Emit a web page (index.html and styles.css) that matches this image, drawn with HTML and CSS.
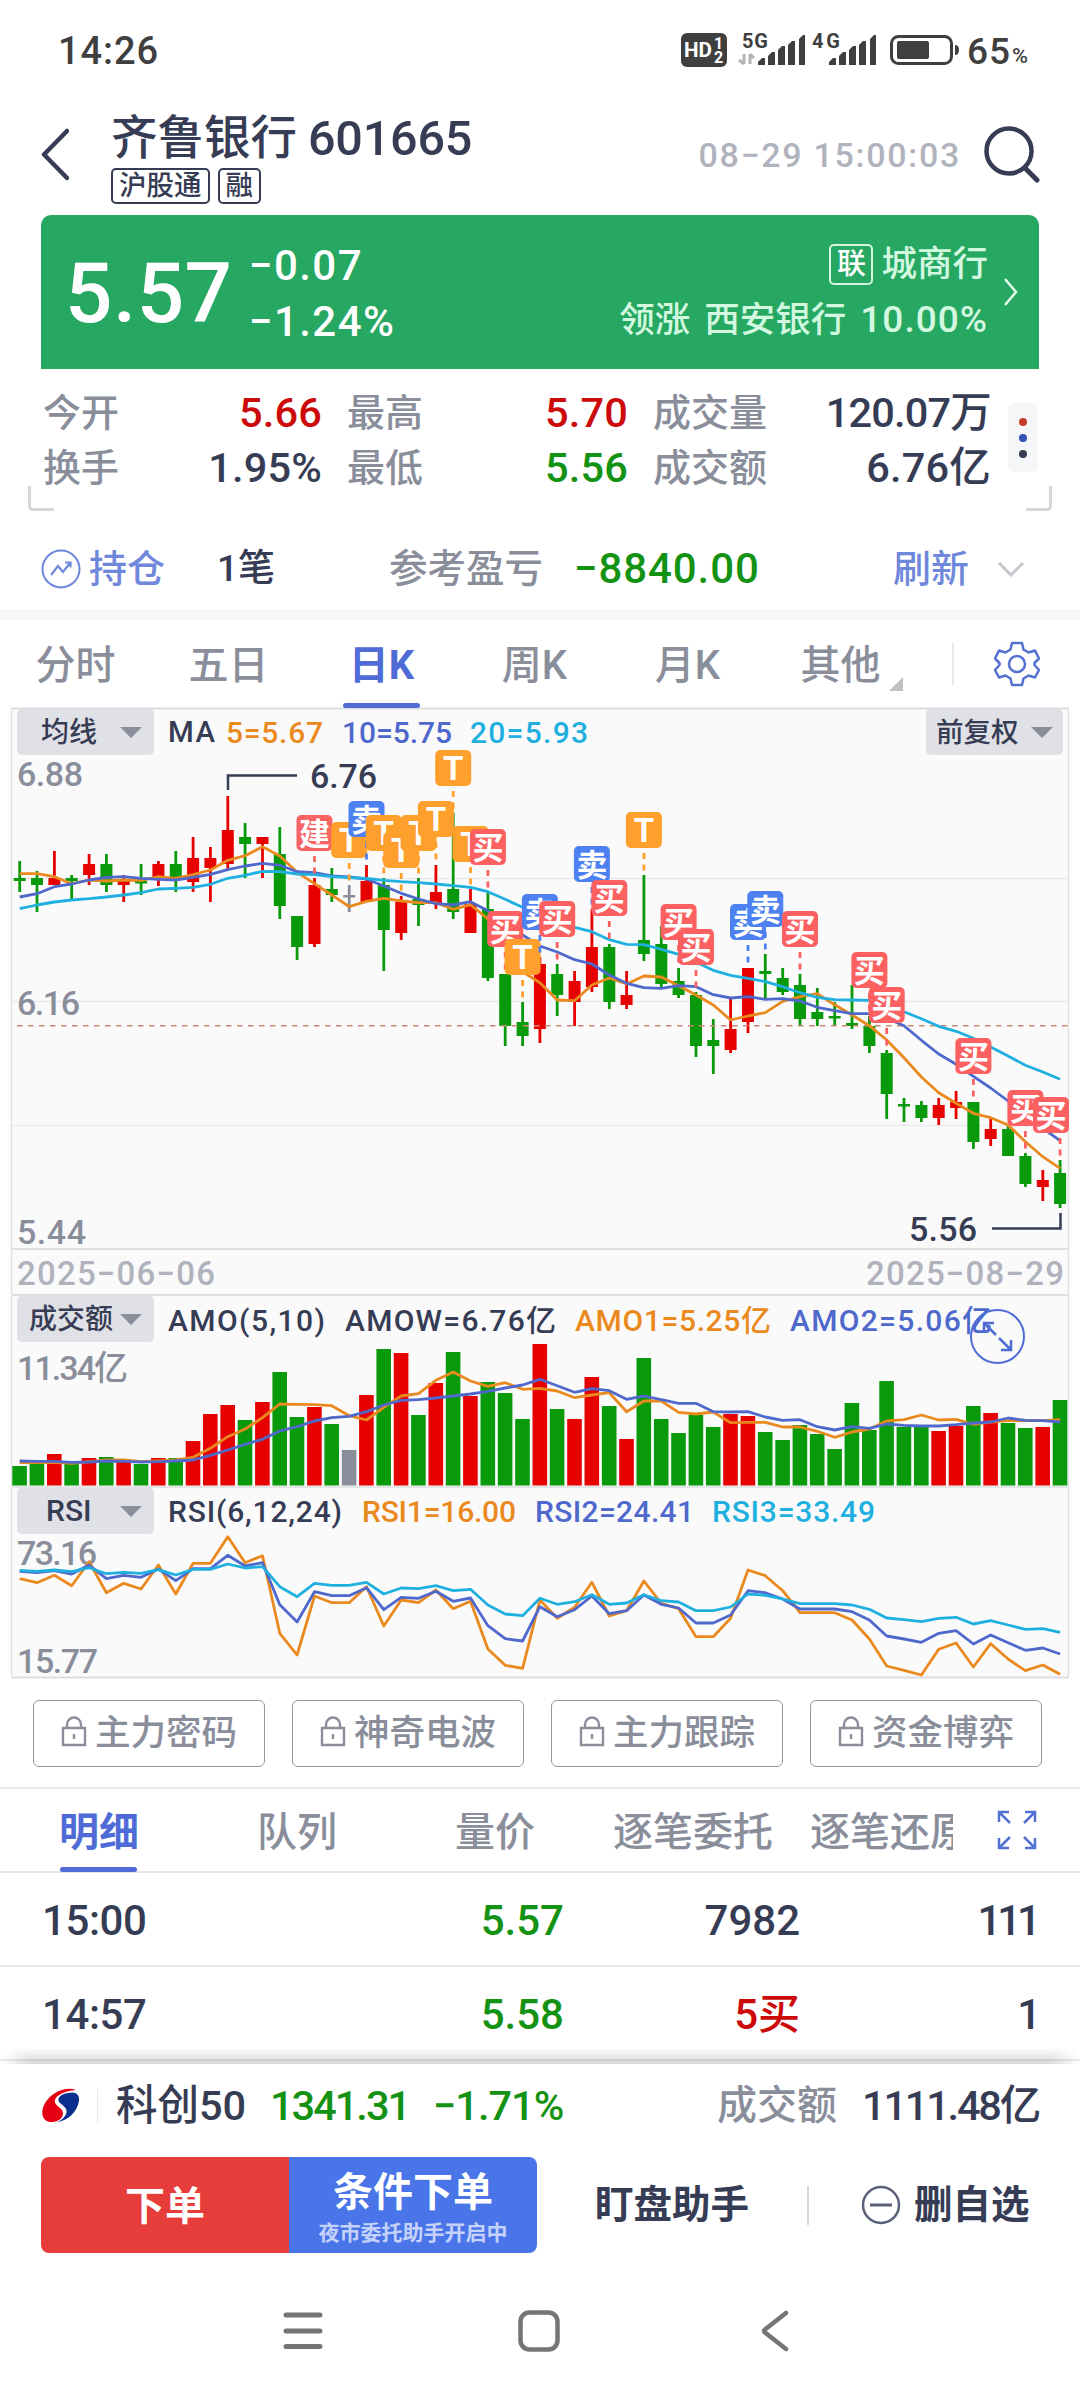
FILE: index.html
```html
<!DOCTYPE html>
<html lang="zh-CN">
<head>
<meta charset="utf-8">
<title>齐鲁银行 601665</title>
<link rel="stylesheet" href="styles.css">
</head>
<body>
<div class="status">
  <span class="clock">14:26</span>
  <svg class="status-icons" viewBox="680 30 350 40">
    <rect x="681" y="33" width="46" height="34" rx="6" fill="#3f3f3f"/>
    <text x="684" y="57" font-size="20" font-weight="700" fill="#fff" textLength="28" lengthAdjust="spacingAndGlyphs">HD</text>
    <text x="714" y="49" font-size="16" font-weight="700" fill="#fff">1</text>
    <text x="714" y="63" font-size="16" font-weight="700" fill="#fff">2</text>
    <g font-size="20" font-weight="700" fill="#3f3f3f">
      <text x="742" y="48" textLength="26">5G</text>
      <text x="812" y="48" textLength="28">4G</text>
    </g>
    <path d="M744 54v10M744 64l-5-4M750 64v-10M750 54l4 4" stroke="#b4b4b4" stroke-width="3" fill="none"/>
    <g fill="#3f3f3f">
      <path d="M758 65v-3l4-4h3v7zM768 65v-9l4-4h3v13zM778 65v-15l4-4h3v19zM788 65v-20l4-4h3v24zM799 65v-26l4-4h2v30z"/>
      <path d="M829 65v-3l4-4h3v7zM839 65v-9l4-4h3v13zM849 65v-15l4-4h3v19zM859 65v-20l4-4h3v24zM870 65v-26l4-4h2v30z"/>
      <rect x="897" y="41" width="32" height="18" rx="2"/>
      <path d="M955 45q4 0 4 5t-4 5z"/>
    </g>
    <rect x="891.5" y="36.500" width="60" height="27" rx="7" fill="none" stroke="#3f3f3f" stroke-width="3"/>
    <text x="967" y="63.500" font-size="37" font-weight="500" fill="#3f3f3f" textLength="43">65</text>
    <text x="1012" y="63" font-size="21" font-weight="500" fill="#3f3f3f" textLength="16" lengthAdjust="spacingAndGlyphs">%</text>
  </svg>
</div>

<header class="header">
  <svg class="back" viewBox="0 0 30 54"><path d="M28 3L5 26.500L28 50" fill="none" stroke="#363c54" stroke-width="4.500" stroke-linecap="round" stroke-linejoin="round"/></svg>
  <div class="title-col">
    <h1 class="title"><span class="name">齐鲁银行</span><span class="code">601665</span></h1>
    <div class="tags"><span class="tag">沪股通</span><span class="tag">融</span></div>
  </div>
  <span class="time">08−29 15:00:03</span>
  <svg class="search" viewBox="0 0 58 58"><circle cx="26" cy="26" r="22.500" fill="none" stroke="#363c54" stroke-width="4.500"/><path d="M42 43L54 55" stroke="#363c54" stroke-width="5" stroke-linecap="round"/></svg>
</header>

<section class="quote">
  <span class="price">5.57</span>
  <div class="change"><span>−0.07</span><span class="pct">−1.24%</span></div>
  <div class="sector">
    <div class="sector-row"><span class="link-tag">联</span><span>城商行</span></div>
    <div class="sector-row lead"><span>领涨</span><span>西安银行</span><span class="lead-pct">10.00%</span></div>
  </div>
  <svg class="quote-arrow" viewBox="0 0 16 30"><path d="M2 2L13 15L2 28" fill="none" stroke="#e4faec" stroke-width="2.500"/></svg>
</section>

<section class="stats">
  <div class="stat-grid">
    <div class="stat"><span>今开</span><b class="up">5.66</b></div>
    <div class="stat"><span>最高</span><b class="up">5.70</b></div>
    <div class="stat"><span>成交量</span><b class="volume">120.07万</b></div>
    <div class="stat"><span>换手</span><b>1.95%</b></div>
    <div class="stat"><span>最低</span><b class="down">5.56</b></div>
    <div class="stat"><span>成交额</span><b>6.76亿</b></div>
  </div>
  <div class="more"><i class="dot dot-red"></i><i class="dot dot-blue"></i><i class="dot dot-dark"></i></div>
  <i class="corner corner-left"></i><i class="corner corner-right"></i>
</section>

<section class="holding">
  <svg class="hold-icon" viewBox="0 0 40 40"><circle cx="20" cy="20" r="18.500" fill="none" stroke="#6f88dc" stroke-width="2"/><path d="M10 26L17 17L22 23L29 14M24 13.500h5.500v5" fill="none" stroke="#6f88dc" stroke-width="2.200"/></svg>
  <span class="hold-link">持仓</span>
  <span class="hold-count">1笔</span>
  <span class="hold-label">参考盈亏</span>
  <span class="hold-value down">−8840.00</span>
  <span class="refresh">刷新</span>
  <svg class="chev" viewBox="0 0 28 16"><path d="M2 2L14 14L26 2" fill="none" stroke="#c4c6cc" stroke-width="3"/></svg>
</section>

<nav class="periods">
  <span class="period">分时</span><span class="period">五日</span><span class="period active">日K</span><span class="period">周K</span><span class="period">月K</span><span class="period other">其他</span>
  <i class="divider"></i>
  <svg class="gear" viewBox="0 0 46 46"><path d="M18 2h10l1.500 6.500l5 3l6.500-2l4 8l-4.500 4.500v2l4.500 5l-4 7.500l-6.500-2l-5 3l-1.500 6.500h-10l-1.500-6.500l-5-3l-6.500 2l-4-7.500l4.500-5v-2l-4.500-4.500l4-8l6.500 2l5-3z" fill="none" stroke="#5370d3" stroke-width="2.500" stroke-linejoin="round"/><circle cx="23" cy="23" r="8" fill="none" stroke="#5370d3" stroke-width="2.500"/></svg>
</nav>

<section class="charts">
  <div class="panel">
    <svg class="plot" id="kline" viewBox="0 708 1080 587"></svg>
    <div class="panel-head"><button class="select ma">均线</button><button class="select adjust">前复权</button></div>
  </div>
  <div class="panel">
    <svg class="plot" id="amount" viewBox="0 1295 1080 192"></svg>
    <div class="panel-head"><button class="select">成交额</button></div>
  </div>
  <div class="panel">
    <svg class="plot" id="rsi" viewBox="0 1487 1080 191"></svg>
    <div class="panel-head"><button class="select rsi">RSI</button></div>
  </div>
</section>

<section class="tools">
  <div class="tool"><svg class="lock" viewBox="0 0 26 31"><path d="M6 12V8.500a7 7 0 0 1 14 0V12M2 12h22v17H2zM13 18v5" fill="none" stroke="#8a8e9b" stroke-width="2.400"/></svg>主力密码</div>
  <div class="tool"><svg class="lock" viewBox="0 0 26 31"><path d="M6 12V8.500a7 7 0 0 1 14 0V12M2 12h22v17H2zM13 18v5" fill="none" stroke="#8a8e9b" stroke-width="2.400"/></svg>神奇电波</div>
  <div class="tool"><svg class="lock" viewBox="0 0 26 31"><path d="M6 12V8.500a7 7 0 0 1 14 0V12M2 12h22v17H2zM13 18v5" fill="none" stroke="#8a8e9b" stroke-width="2.400"/></svg>主力跟踪</div>
  <div class="tool"><svg class="lock" viewBox="0 0 26 31"><path d="M6 12V8.500a7 7 0 0 1 14 0V12M2 12h22v17H2zM13 18v5" fill="none" stroke="#8a8e9b" stroke-width="2.400"/></svg>资金博弈</div>
</section>

<nav class="details">
  <div class="detail-tabs"><span class="detail active">明细</span><span class="detail">队列</span><span class="detail">量价</span><span class="detail">逐笔委托</span><span class="detail last">逐笔还原</span></div>
  <svg class="expand" viewBox="0 0 40 40"><path d="M2 12V2h10M2 2l11 11M28 2h10v10M38 2L27 13M2 28v10h10M2 38l11-11M38 28v10H28M38 38L27 27" fill="none" stroke="#5370d3" stroke-width="2.500"/></svg>
</nav>
<div class="ticks">
  <div class="tick"><span class="t-time">15:00</span><span class="t-price down">5.57</span><span class="t-vol">7982</span><span class="t-num">111</span></div>
  <div class="tick"><span class="t-time">14:57</span><span class="t-price down">5.58</span><span class="t-vol up">5买</span><span class="t-num">1</span></div>
  <i class="shade"></i>
</div>

<footer class="footer">
  <div class="index">
    <svg class="logo" viewBox="0 0 40 36"><path d="M35 2C24-2 9 5 3 17C-1 26 2 35 12 34C20 33 24 27 21 22C18 18 13 17 14 12C15 7 24 3 35 2Z" fill="#e50012"/><path d="M27 5C19 6 15 11 19 15C24 19 28 22 24 28C22 31 19 33 16 34C27 33 36 24 38 13C39 6 34 3 27 5Z" fill="#0b2f8f"/></svg>
    <i class="index-divider"></i>
    <span class="index-name">科创50</span><span class="index-value down">1341.31</span><span class="index-pct down">−1.71%</span>
    <span class="index-label">成交额</span><span class="index-amount">1111.48亿</span>
  </div>
  <div class="actions">
    <div class="order">下单</div>
    <div class="cond"><span class="cond-title">条件下单</span><span class="cond-sub">夜市委托助手开启中</span></div>
    <span class="helper">盯盘助手</span>
    <i class="act-divider"></i>
    <svg class="minus" viewBox="0 0 40 40"><circle cx="20" cy="20" r="18" fill="none" stroke="#5a6078" stroke-width="2.500"/><path d="M9 20h22" stroke="#5a6078" stroke-width="3"/></svg>
    <span class="remove">删自选</span>
  </div>
</footer>
<div class="sysnav">
  <svg viewBox="0 0 42 42"><path d="M4 5h34M4 21h34M4 36.500h34" stroke="#757575" stroke-width="5" stroke-linecap="round"/></svg>
  <svg viewBox="0 0 42 42"><rect x="2.500" y="2.500" width="37" height="37" rx="9" fill="none" stroke="#757575" stroke-width="4.500"/></svg>
  <svg viewBox="0 0 42 42"><path d="M32 3L11 19.500q-2 1.500 0 3L32 39" fill="none" stroke="#757575" stroke-width="4.500" stroke-linecap="round"/></svg>
</div>
<script src="chart.js"></script>
</body>
</html>
```
FILE: styles.css
```css
* { box-sizing: border-box; }
body {
  margin: 0;
  width: 1080px;
  height: 2400px;
  overflow: hidden;
  background: #fff;
  color: #363c54;
  font-family: Roboto, "Noto Sans CJK SC", sans-serif;
  font-weight: 500;
  font-size: 38px;
  white-space: nowrap;
}
svg { display: block; flex: none; }
.up { color: #cc0a0a; }
.down { color: #139213; }

.status { height: 100px; padding: 2px 50px 0 58px; display: flex; align-items: center; justify-content: space-between; color: #3f3f3f; }
.clock { font-size: 38px; letter-spacing: 0.9px; }
.status-icons { width: 350px; height: 40px; margin-top: -2px; overflow: visible; }

.header { height: 115px; display: flex; padding: 12px 39px 0 39px; }
.back { width: 30px; height: 54px; margin-top: 16px; }
.title-col { margin-left: 42px; width: 400px; }
.title { margin: 0; font-size: 48.500px; font-weight: 500; line-height: 54px; display: flex; gap: 11px; }
.name { font-size: 46.500px; line-height: 52px; }
.code { line-height: 53px; letter-spacing: -0.200px; }
.tags { display: flex; gap: 8px; margin-top: 3px; }
.tag { height: 36px; border: 2.5px solid #363c54; border-radius: 5px; padding: 0 6px; font-size: 27.500px; line-height: 32px; }
.time { margin-left: auto; margin-right: 22px; line-height: 86px; font-size: 34px; color: #b0b3bd; letter-spacing: 1.7px; }
.search { width: 58px; height: 58px; margin-top: 13px; }

.quote { margin: 0 41px; height: 154px; border-radius: 10px 10px 0 0; background: #27a862; color: #fff; display: flex; align-items: center; padding-right: 20px; }
.price { width: 208px; padding: 4px 0 0 24px; font-size: 83.500px; letter-spacing: 0.5px; line-height: 154px; }
.change { font-size: 42px; line-height: 56px; display: flex; flex-direction: column; letter-spacing: 1.4px; padding-top: 4px; }
.sector { margin-left: auto; color: #d3f8e0; font-size: 35.500px; }
.sector-row { display: flex; justify-content: flex-end; align-items: center; gap: 8px; height: 56px; line-height: 56px; }
.lead { gap: 14px; }
.lead-pct { font-size: 37px; letter-spacing: 1px; }
.link-tag { width: 44px; height: 41px; border: 2.5px solid #d3f8e0; border-radius: 5px; font-size: 29px; line-height: 37px; text-align: center; color: #fff; }
.quote-arrow { width: 16px; height: 30px; margin-left: 15px; }

.stats { position: relative; height: 142px; padding: 16px 42px 0 43px; display: flex; justify-content: space-between; }
.stat-grid { display: grid; grid-template-columns: 279px 281px 338px; column-gap: 25px; grid-auto-rows: 55px; }
.stat { display: flex; justify-content: space-between; line-height: 56px; color: #8a8e9b; }
.stat b { font-weight: 500; font-size: 41.500px; letter-spacing: 0.2px; line-height: 56px; color: #363c54; }
.stat .volume { letter-spacing: -0.8px; }
.stat .up { color: #cc0a0a; }
.stat .down { color: #139213; }
.more { width: 30px; height: 69px; margin-top: 18px; background: #f5f6f8; border-radius: 5px; display: flex; flex-direction: column; align-items: center; justify-content: center; gap: 8px; }
.dot { width: 8px; height: 8px; border-radius: 50%; }
.dot-red { background: #c23d2c; }
.dot-blue { background: #3550b8; }
.dot-dark { background: #363c54; }
.corner { position: absolute; bottom: 0; width: 26px; height: 25px; border-bottom: 3px solid #d5d6da; }
.corner-left { left: 28px; border-left: 3px solid #d5d6da; border-bottom-left-radius: 5px; }
.corner-right { right: 28px; border-right: 3px solid #d5d6da; border-bottom-right-radius: 5px; }

.holding { height: 109px; padding: 17px 55px 0 41px; border-bottom: 11px solid #f6f7f9; display: flex; align-items: center; line-height: 82px; }
.hold-icon { width: 40px; height: 40px; }
.hold-link { margin-left: 8px; color: #6f88dc; }
.hold-count { margin-left: 52px; width: 172px; font-size: 37px; }
.hold-label { width: 185px; font-size: 38.500px; color: #8a8e9b; }
.hold-value { font-size: 42px; letter-spacing: 0.9px; }
.refresh { margin-left: auto; color: #6f88dc; }
.chev { width: 28px; height: 16px; margin-left: 28px; }

.periods { height: 88px; display: flex; align-items: center; font-size: 40px; color: #8a8e9b; }
.period { width: 153px; height: 88px; line-height: 91px; text-align: center; position: relative; }
.period:first-child { margin-left: -1px; }
.period.active { color: #4f6cd6; font-weight: 700; }
.period.active::after { content: ""; position: absolute; left: 38px; bottom: 0; width: 77px; height: 5px; border-radius: 3px; background: #4f6cd6; }
.other::after { content: ""; position: absolute; right: 14px; bottom: 17px; border-left: 14px solid transparent; border-bottom: 14px solid #c0c0c2; }
.divider { width: 2px; height: 42px; background: #e8e9ec; margin-left: 35px; }
.gear { width: 46px; height: 46px; margin-left: 40px; }

.panel { display: grid; }
.plot, .panel-head { grid-area: 1 / 1; }
.plot { width: 1080px; overflow: visible; font-family: Roboto, "Noto Sans CJK SC", sans-serif; font-weight: 500; }
.panel-head { padding: 1px 17px 0; display: flex; justify-content: space-between; align-items: flex-start; }
.select { width: 137px; height: 46px; border: 0; border-radius: 5px; background: #e0e1e6; color: #363c54; font: inherit; font-size: 28px; line-height: 47px; padding: 0 12px; display: flex; align-items: center; justify-content: space-between; }
.select::after { content: ""; border: 11px solid transparent; border-top: 11px solid #8a8e9b; border-bottom: 0; }
.select.ma { padding-left: 24px; }
.select.adjust { padding: 0 10px 0 10px; font-size: 27.500px; }
.select.rsi { padding-left: 29px; font-size: 30px; line-height: 44px; }

.tools { height: 111px; padding: 22px 38px 0 33px; display: flex; justify-content: space-between; border-bottom: 2px solid #e8e9ec; }
.tool { width: 232px; height: 67px; border: 1.5px solid #94979f; border-radius: 6px; display: flex; align-items: center; justify-content: center; gap: 8px; font-size: 35.500px; color: #8a8e9b; line-height: 65px; }
.lock { width: 26px; height: 31px; margin-top: -4px; }

.details { height: 84px; border-bottom: 2px solid #e8e9ec; display: flex; align-items: center; justify-content: space-between; padding-right: 43px; }
.detail-tabs { width: 953px; height: 84px; overflow: hidden; display: flex; font-size: 40px; line-height: 90px; color: #8a8e9b; }
.detail { width: 198px; flex: none; text-align: center; position: relative; }
.detail.active { color: #4f6cd6; font-weight: 700; }
.detail.active::after { content: ""; position: absolute; left: 60px; top: 79px; width: 77px; height: 5px; border-radius: 3px; background: #4f6cd6; }
.detail.last { width: auto; margin-left: 18px; }
.expand { width: 40px; height: 40px; }

.ticks { height: 191px; position: relative; }
.tick { height: 94px; padding: 0 41px 0 42px; display: grid; grid-template-columns: 161px 361px 236px 1fr; text-align: right; font-size: 42px; line-height: 96px; border-bottom: 2px solid #e8e9ec; }
.t-time { text-align: left; letter-spacing: -0.4px; }
.t-num { letter-spacing: -4px; padding-right: 2px; }
.shade { position: absolute; left: 0; right: 0; bottom: 0; height: 15px; background: linear-gradient(rgba(120, 120, 120, 0.04), rgba(120, 120, 120, 0.28)); -webkit-mask-image: linear-gradient(90deg, transparent, #000 30px, #000 1050px, transparent); }

.index { height: 84px; padding: 0 41px; display: flex; align-items: center; font-size: 41.500px; line-height: 86px; }
.logo { width: 40px; height: 36px; }
.index-divider { width: 1px; height: 34px; margin-left: 16px; background: #e8e9ec; }
.index-name { margin-left: 18px; width: 154px; }
.index-value { width: 163px; letter-spacing: -2px; }
.index-pct { letter-spacing: -1px; }
.index-label { margin-left: auto; color: #8a8e9b; font-size: 40px; }
.index-amount { margin-left: 25px; letter-spacing: -2.2px; }
.actions { height: 105px; padding: 9px 41px 0; display: flex; align-items: center; line-height: 98px; }
.order, .cond { width: 248px; height: 96px; color: #fff; font-size: 40px; font-weight: 700; }
.order { background: #e63c3a; border-radius: 8px 0 0 8px; text-align: center; line-height: 99px; }
.cond { background: #4a75e8; border-radius: 0 8px 8px 0; display: flex; flex-direction: column; align-items: center; padding-top: 12px; }
.cond-title { line-height: 47px; }
.cond-sub { font-size: 21px; line-height: 34px; color: #c4d2fb; }
.helper { margin-left: 58px; font-size: 38.500px; font-weight: 700; }
.act-divider { width: 2px; height: 39px; margin-left: 58px; background: #d5d6da; }
.minus { width: 40px; height: 40px; margin-left: 52px; }
.remove { margin-left: 13px; font-size: 38.500px; font-weight: 700; }
.sysnav { height: 147px; padding: 57px 284px 0 282px; display: flex; justify-content: space-between; }
.sysnav svg { width: 42px; height: 42px; }
```
FILE: chart.js
```js
(function () {
  var RED = '#e60000', GREEN = '#099a0c', GRAY = '#8a8e9b', INK = '#363c54';
  var ORANGE = '#ea8a1e', BLUE = '#4f68cc', CYAN = '#1fb0e0';
  var STEP = 17.34, X0 = 19.7;
  function x(i) { return X0 + STEP * i; }
  function rect(a, b, w, h, f, extra) {
    return '<rect x="' + a + '" y="' + b + '" width="' + w + '" height="' + h + '" fill="' + f + '" ' + (extra || '') + '/>';
  }
  function line(d, c, w, extra) {
    return '<path d="' + d + '" fill="none" stroke="' + c + '" stroke-width="' + (w || 2) + '" ' + (extra || '') + '/>';
  }
  function text(a, b, s, t, c, len) {
    return '<text x="' + a + '" y="' + b + '" font-size="' + s + '" fill="' + c + '"' + (len ? ' textLength="' + len + '"' : '') + '>' + t + '</text>';
  }
  function series(v, base, c) {
    var d = v.map(function (n, i) { return (i ? 'L' : 'M') + x(i).toFixed(1) + ' ' + (base + n / 3).toFixed(1); }).join('');
    return line(d, c, 2.8, 'stroke-linejoin="round"');
  }
  function frame(y, h) {
    return rect(12, y, 1056, h, '#fafafb') + line('M11.5 ' + y + 'v' + h + 'M1068.5 ' + y + 'v' + h, '#e0e1e3', 1.5);
  }

  /* candles: direction, high, body top, body bottom, low */
  var candles = 'g861,878,881,892 g871,878,885,912 r851,878,885,885 g875,878,881,899 r854,864,875,885 g854,864,885,892 r875,881,885,902 g864,881,883,895 r861,864,878,886 g851,864,878,892 r837,858,882,892 r847,858,868,902 r796,830,864,869 g823,837,844,878 r837,837,844,878 g827,854,906,919 g916,916,947,960 r878,885,944,947 g868,889,895,902 x885,895,897,912 r865,881,902,902 g878,885,930,971 r896,902,933,940 g878,899,905,926 r865,892,903,909 g813,889,912,919 r889,904,933,933 g892,909,978,981 g974,974,1026,1046 g1002,1022,1036,1046 r957,964,1029,1043 g964,974,995,1016 r971,981,1002,1026 r909,947,987,992 g944,947,1002,1009 r971,995,1005,1009 g875,940,954,961 g926,944,984,988 g968,981,995,998 g992,995,1046,1057 g1019,1040,1046,1074 r999,1029,1050,1053 r968,968,1022,1033 g954,971,974,999 g968,978,992,995 g974,985,1019,1026 g988,1012,1019,1026 g1002,1016,1018,1025 g985,1023,1026,1029 g1016,1026,1046,1053 g1050,1053,1094,1119 g1098,1104,1106,1122 g1101,1105,1118,1122 r1098,1105,1118,1125 r1091,1102,1108,1119 g1102,1102,1142,1149 r1119,1129,1139,1146 g1125,1129,1156,1156 g1153,1156,1184,1187 r1170,1180,1187,1201 g1160,1173,1204,1208'.split(' ');
  var colors = { r: RED, g: GREEN, x: GRAY };

  var ma5 = [521,521,530,551,540,543,540,541,530,535,524,510,481,467,440,468,517,551,585,620,604,595,603,608,608,628,614,657,730,815,848,900,902,855,834,852,828,831,857,885,915,960,948,938,904,890,881,914,945,977,1020,1073,1131,1178,1210,1240,1253,1275,1325,1370,1405];
  var ma10 = [591,581,560,552,540,532,530,535,538,540,532,523,509,498,490,496,515,518,528,531,537,558,580,597,611,615,605,632,670,705,738,756,779,792,825,850,863,865,857,860,884,894,890,898,896,903,922,932,941,941,955,977,1021,1062,1093,1129,1164,1203,1245,1285,1322];
  var ma20 = [626,615,606,600,596,591,585,578,567,565,562,553,535,526,514,515,522,524,530,533,535,541,545,548,552,557,562,575,598,622,645,665,682,695,719,733,734,748,763,787,811,826,835,845,860,878,892,899,900,901,915,935,956,979,994,1015,1041,1068,1096,1116,1138];

  var marks = [[17,815,'建'],[19,822,'T'],[20,801,'卖'],[21,815,'T'],[22,832,'T'],[23,815,'T'],[24,801,'T'],[25,750,'T'],[26,826,'T'],[27,829,'买'],[28,911,'买'],[29,939,'T'],[30,894,'卖'],[31,901,'买'],[33,846,'卖'],[34,880,'买'],[36,812,'T'],[38,904,'买'],[39,929,'买'],[42,904,'卖'],[43,891,'卖'],[45,911,'买'],[49,952,'买'],[50,987,'买'],[55,1038,'买'],[58,1090,'买'],[60,1097,'买']];
  var markColor = { 'T': '#ffa02c', '卖': '#4d80f0', '买': '#fc6060', '建': '#f86464' };

  var k = frame(708, 587);
  k += line('M12 708.500H1069', '#dcdde0', 2);
  k += line('M12 878.500H1068M12 1001.500H1068M12 1125.500H1068', '#ececee', 1.5);
  k += line('M12 1249H1069M12 1295H1069', '#dcdee4', 2);
  k += text(17, 786, 34, '6.88', GRAY, 66) + text(17, 1015, 34, '6.16', GRAY, 63) + text(17, 1244, 34, '5.44', GRAY, 69);
  candles.forEach(function (s, i) {
    var c = colors[s[0]], v = s.slice(1).split(',').map(Number), cx = x(i);
    k += rect((cx - 1.4).toFixed(1), v[0], 2.8, v[3] - v[0], c);
    k += rect((cx - 6).toFixed(1), v[1], 12, Math.max(v[2] - v[1], 2.5), c);
  });
  k += line('M17 1025.800H1068', '#cc8577', 1.5, 'stroke-dasharray="5.500 5.500"');
  k += series(ma5, 700, ORANGE) + series(ma10, 700, BLUE) + series(ma20, 700, CYAN);
  marks.forEach(function (m) {
    var cx = x(m[0]), bx = Math.min(cx - 18, 1033), c = markColor[m[2]];
    k += line('M' + cx.toFixed(1) + ' ' + (m[1] + 41) + 'v18', c, 2.8, 'stroke-dasharray="6 5.500"');
    k += rect(bx.toFixed(1), m[1], 36, 36, c, 'rx="5"');
    k += '<text x="' + (bx + 18) + '" y="' + (m[1] + 30) + '" font-size="' + (m[2] === 'T' ? 33 : 31) + '" font-weight="700" fill="#fff" text-anchor="middle">' + m[2] + '</text>';
  });
  k += line('M228 790V775.500H297', INK, 2.5) + text(310, 788, 34, '6.76', INK, 67);
  k += line('M992 1228.500H1060.500V1213', INK, 2.5) + text(909, 1241, 34, '5.56', INK, 68);
  k += text(168, 742, 29.5, 'MA', INK, 47) + text(226, 743, 30, '5=5.67', ORANGE, 97) + text(342, 743, 30, '10=5.75', BLUE, 110) + text(470, 743, 30, '20=5.93', CYAN, 118);
  k += text(17, 1285, 33, '2025−06−06', '#b0b3bd', 198) + text(866, 1285, 33, '2025−08−29', '#b0b3bd', 198);
  document.getElementById('kline').innerHTML = k;

  /* turnover: bar colour and bar top */
  var bars = 'g1466 g1464 r1454 g1463 r1458 g1457 r1462 g1464 r1458 g1458 r1441 r1414 r1405 g1420 r1402 g1372 g1417 r1407 g1424 x1450 r1395 g1349 r1353 g1415 r1383 g1352 r1396 g1382 g1393 g1419 r1344 g1409 r1419 r1377 g1406 r1439 g1358 g1419 g1433 g1415 g1427 r1414 r1416 g1432 g1440 g1425 g1434 g1449 g1403 g1430 g1381 g1427 g1427 r1431 r1426 g1406 r1413 g1423 g1428 r1427 g1400'.split(' ');
  var amo5 = [578,578,577,580,575,570,570,575,573,570,562,535,500,477,443,402,403,404,407,437,450,412,378,371,331,306,333,349,338,358,355,363,383,375,368,425,393,393,427,432,426,458,457,457,471,471,484,502,486,477,453,449,435,450,448,463,456,452,452,452,449];
  var amo10 = [573,574,574,577,576,573,574,576,575,573,570,556,540,523,508,483,470,453,443,439,425,405,391,389,384,378,372,364,354,345,328,347,367,356,362,388,378,389,400,400,425,426,425,441,451,449,470,480,470,475,462,466,468,468,464,459,456,444,451,452,456];
  var a = frame(1296, 191);
  a += line('M12 1487H1069', '#e4e5e7', 2) + text(17, 1380, 34, '11.34亿', GRAY, 111);
  bars.forEach(function (s, i) {
    var top = +s.slice(1);
    a += rect((x(i) - 7.4).toFixed(1), top, 14.6, 1485.5 - top, colors[s[0]]);
  });
  a += series(amo5, 1270, ORANGE) + series(amo10, 1270, BLUE);
  a += text(168, 1331, 30, 'AMO(5,10)', INK, 157) + text(345, 1331, 30, 'AMOW=6.76亿', INK, 211) + text(575, 1331, 30, 'AMO1=5.25亿', ORANGE, 196) + text(790, 1331, 30, 'AMO2=5.06亿', BLUE, 202);
  a += '<circle cx="997.500" cy="1336.500" r="26.500" fill="none" stroke="#4f6cd6" stroke-width="2"/>';
  a += line('M984 1333V1323H994M984 1323L996 1335M999 1338L1011 1350M1011 1340V1350H1001', '#4f6cd6', 2.5);
  document.getElementById('amount').innerHTML = a;

  var rsi6 = [926,938,916,947,875,968,940,957,885,972,880,880,800,878,857,1090,1155,978,998,998,950,1068,990,998,960,1016,994,1137,1186,1195,990,1045,1012,937,1038,1022,933,1000,1016,1100,1100,1045,900,917,962,1028,1028,1028,1050,1107,1188,1201,1215,1138,1119,1191,1121,1167,1202,1185,1213];
  var rsi12 = [904,908,902,912,885,926,916,922,897,932,896,896,856,888,878,1004,1056,965,977,977,953,1019,982,985,964,994,984,1067,1106,1113,1010,1040,1019,978,1031,1022,975,1003,1014,1059,1059,1035,962,968,987,1017,1017,1017,1025,1050,1098,1107,1117,1090,1082,1122,1095,1118,1141,1134,1152];
  var rsi24 = [901,904,900,905,893,911,907,910,899,915,898,898,882,894,890,950,980,940,946,946,937,972,954,956,947,962,958,1005,1032,1037,985,1003,995,974,1003,999,974,992,996,1022,1022,1011,972,976,987,1001,1001,1001,1005,1018,1044,1049,1055,1045,1042,1062,1052,1065,1078,1076,1087];
  var r = frame(1488, 189);
  r += line('M12 1677.500H1069', '#dcdde0', 2);
  r += text(17, 1565, 34, '73.16', GRAY, 80) + text(17, 1673, 34, '15.77', GRAY, 81);
  r += series(rsi6, 1270, ORANGE) + series(rsi12, 1270, BLUE) + series(rsi24, 1270, CYAN);
  r += text(168, 1522, 30, 'RSI(6,12,24)', INK, 174) + text(362, 1522, 30, 'RSI1=16.00', ORANGE, 154) + text(535, 1522, 30, 'RSI2=24.41', BLUE, 159) + text(712, 1522, 30, 'RSI3=33.49', CYAN, 163);
  document.getElementById('rsi').innerHTML = r;
})();
```
